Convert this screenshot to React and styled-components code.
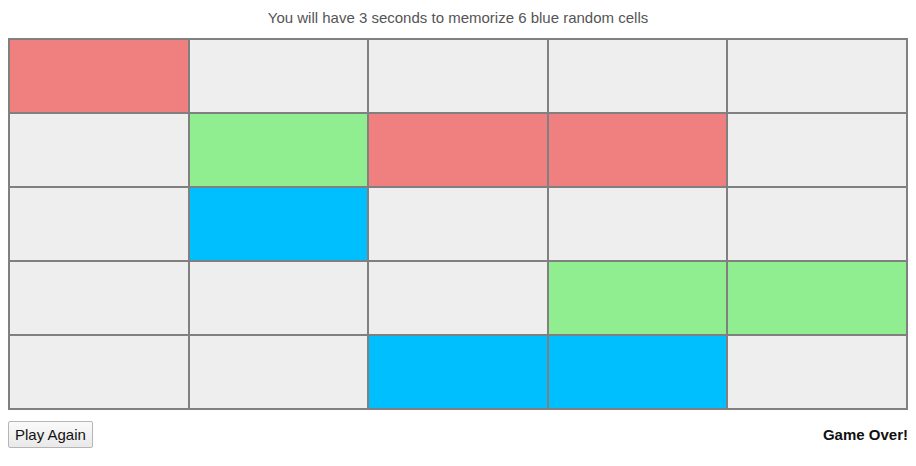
import React from 'react'
import styled, { createGlobalStyle } from 'styled-components'

const GlobalStyle = createGlobalStyle`
  body {
    margin: 8px;
    background: #fff;
    font-family: "Liberation Sans", Arial, sans-serif;
  }
`

const colors = {
  red: '#f08080',
  green: '#90ee90',
  blue: '#00bfff',
  empty: '#eeeeee',
}

// r = wrong pick, g = correct pick, b = missed blue
const board = [
  ['r', '', '', '', ''],
  ['', 'g', 'r', 'r', ''],
  ['', 'b', '', '', ''],
  ['', '', '', 'g', 'g'],
  ['', '', 'b', 'b', ''],
]

const keyColor = { r: colors.red, g: colors.green, b: colors.blue }

const Wrap = styled.div`
  width: 900px;
`

const Message = styled.p`
  margin: 0;
  height: 30px;
  line-height: 20px;
  text-align: center;
  font-size: 15px;
  color: #555;
`

const Board = styled.div`
  display: grid;
  grid-template-columns: repeat(5, 1fr);
  grid-auto-rows: 74px;
  border: 1px solid #808080;
`

const Cell = styled.div`
  box-sizing: border-box;
  border: 1px solid #808080;
  background: ${(p) => p.$bg};
`

const Footer = styled.div`
  display: flex;
  justify-content: space-between;
  align-items: center;
  margin-top: 11px;
`

const Button = styled.button`
  font-family: "Liberation Sans", Arial, sans-serif;
  font-size: 15px;
  color: #111;
  height: 27px;
  padding: 0 6px;
  border: 1px solid #b5b5b5;
  border-radius: 2px;
  background: linear-gradient(#fafafa, #e9e9e9);
`

const Status = styled.strong`
  font-size: 15px;
  color: #111;
`

export default function App() {
  return (
    <>
      <GlobalStyle />
      <Wrap>
        <Message>You will have 3 seconds to memorize 6 blue random cells</Message>
        <Board>
          {board.flat().map((k, i) => (
            <Cell key={i} $bg={keyColor[k] || colors.empty} />
          ))}
        </Board>
        <Footer>
          <Button>Play Again</Button>
          <Status>Game Over!</Status>
        </Footer>
      </Wrap>
    </>
  )
}
